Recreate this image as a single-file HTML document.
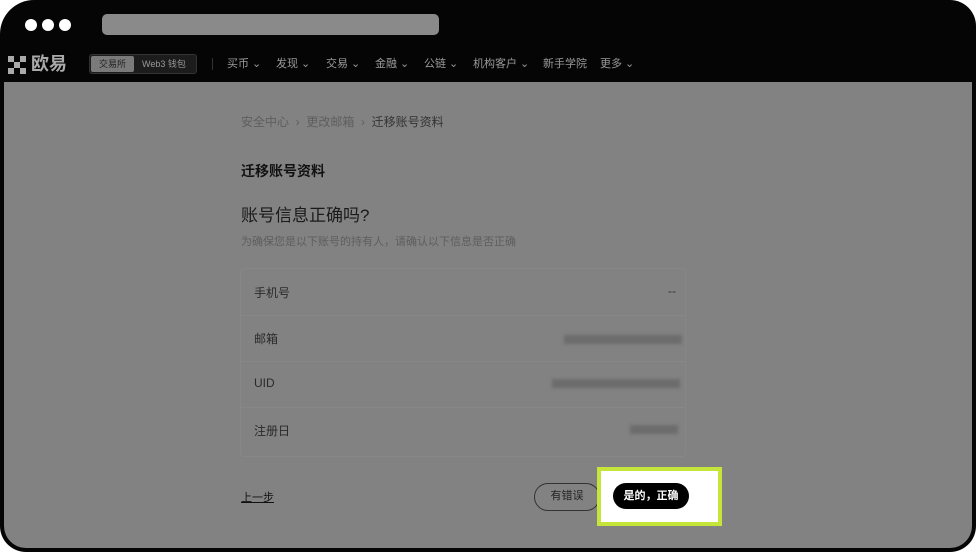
<!DOCTYPE html>
<html><head><meta charset="utf-8"><style>
*{margin:0;padding:0;box-sizing:border-box}
body{width:976px;height:552px;background:#fff;position:relative;overflow:hidden;font-family:"Liberation Sans","Noto Sans CJK SC",sans-serif}
.frame{position:absolute;left:0;top:0;width:976px;height:552px;background:#050505;border-radius:34px 26px 26px 26px}
.dot{position:absolute;top:19px;width:12px;height:12px;border-radius:50%;background:#fff}
.url{position:absolute;left:102px;top:14px;width:337px;height:21px;background:#8a8a8a;border-radius:5px}
.nav{position:absolute;top:54px;height:20px;color:#9a9a9a;font-size:11px;line-height:20px}
.content{position:absolute;left:4px;top:82px;width:968px;height:466px;background:#828282;border-radius:0 0 22px 22px}
.a{position:absolute;white-space:nowrap}
.row{position:absolute;left:240px;width:446px;height:46px;border-bottom:1px solid #878787}
.lbl{position:absolute;left:14px;top:14px;font-size:12px;color:#2a2a2a}
.blur{position:absolute;height:9px;background:#6c6c6c;filter:blur(1.5px)}
</style></head><body>
<div class="frame"></div>
<div class="dot" style="left:25px"></div><div class="dot" style="left:42px"></div><div class="dot" style="left:59px"></div>
<div class="url"></div>
<svg class="a" style="left:8px;top:56px" width="18" height="18" viewBox="0 0 3 3"><g fill="#aaa"><rect x="0" y="0" width="1" height="1"/><rect x="2" y="0" width="1" height="1"/><rect x="1" y="1" width="1" height="1"/><rect x="0" y="2" width="1" height="1"/><rect x="2" y="2" width="1" height="1"/></g></svg>
<div class="a" style="left:31px;top:53px;font-size:18px;font-weight:bold;color:#aaa;line-height:22px">欧易</div>
<div class="a" style="left:89px;top:54px;width:108px;height:20px;background:#1c1c1c;border:1px solid #333;border-radius:3px"></div>
<div class="a" style="left:91px;top:56px;width:43px;height:16px;background:#7a7a7a;border-radius:2px;font-size:9px;color:#222;text-align:center;line-height:16px">交易所</div>
<div class="a" style="left:142px;top:56px;font-size:9px;color:#999;line-height:16px">Web3 钱包</div>
<div class="a" style="left:212px;top:58px;width:1px;height:12px;background:#333"></div>
<div class="nav" style="left:227px">买币 ⌄</div>
<div class="nav" style="left:276px">发现 ⌄</div>
<div class="nav" style="left:326px">交易 ⌄</div>
<div class="nav" style="left:375px">金融 ⌄</div>
<div class="nav" style="left:424px">公链 ⌄</div>
<div class="nav" style="left:473px">机构客户 ⌄</div>
<div class="nav" style="left:543px">新手学院</div>
<div class="nav" style="left:600px">更多 ⌄</div>
<div class="content"></div>
<div class="a" style="left:241px;top:113px;font-size:12px;color:#5e5e5e">安全中心 &nbsp;›&nbsp; 更改邮箱 &nbsp;›&nbsp; <span style="color:#333">迁移账号资料</span></div>
<div class="a" style="left:241px;top:161px;font-size:14px;font-weight:bold;color:#111">迁移账号资料</div>
<div class="a" style="left:241px;top:201px;font-size:17px;color:#1a1a1a">账号信息正确吗?</div>
<div class="a" style="left:241px;top:233px;font-size:11px;color:#5e5e5e">为确保您是以下账号的持有人，请确认以下信息是否正确</div>
<div class="a" style="left:240px;top:268px;width:446px;height:189px;border:1px solid #878787;border-radius:4px"></div>
<div class="row" style="top:270px"><span class="lbl">手机号</span><span class="a" style="right:10px;top:14px;font-size:12px;color:#333">--</span></div>
<div class="row" style="top:316px"><span class="lbl">邮箱</span><div class="blur" style="left:324px;top:19px;width:118px"></div></div>
<div class="row" style="top:362px"><span class="lbl">UID</span><div class="blur" style="left:312px;top:17px;width:128px"></div></div>
<div class="row" style="top:408px;border:none"><span class="lbl">注册日</span><div class="blur" style="left:390px;top:17px;width:48px"></div></div>
<div class="a" style="left:241px;top:489px;font-size:11px;color:#111;text-decoration:underline">上一步</div>
<div class="a" style="left:534px;top:483px;width:66px;height:28px;border:1.5px solid #333;border-radius:14px;font-size:11px;color:#222;text-align:center;line-height:25px">有错误</div>
<div class="a" style="left:597px;top:467px;width:125px;height:59px;background:#fff;border:4px solid #c6e53a"></div>
<div class="a" style="left:613px;top:483px;width:76px;height:26px;background:#000;border-radius:13px;font-size:11px;color:#fff;text-align:center;line-height:26px;font-weight:bold">是的，正确</div>
</body></html>
